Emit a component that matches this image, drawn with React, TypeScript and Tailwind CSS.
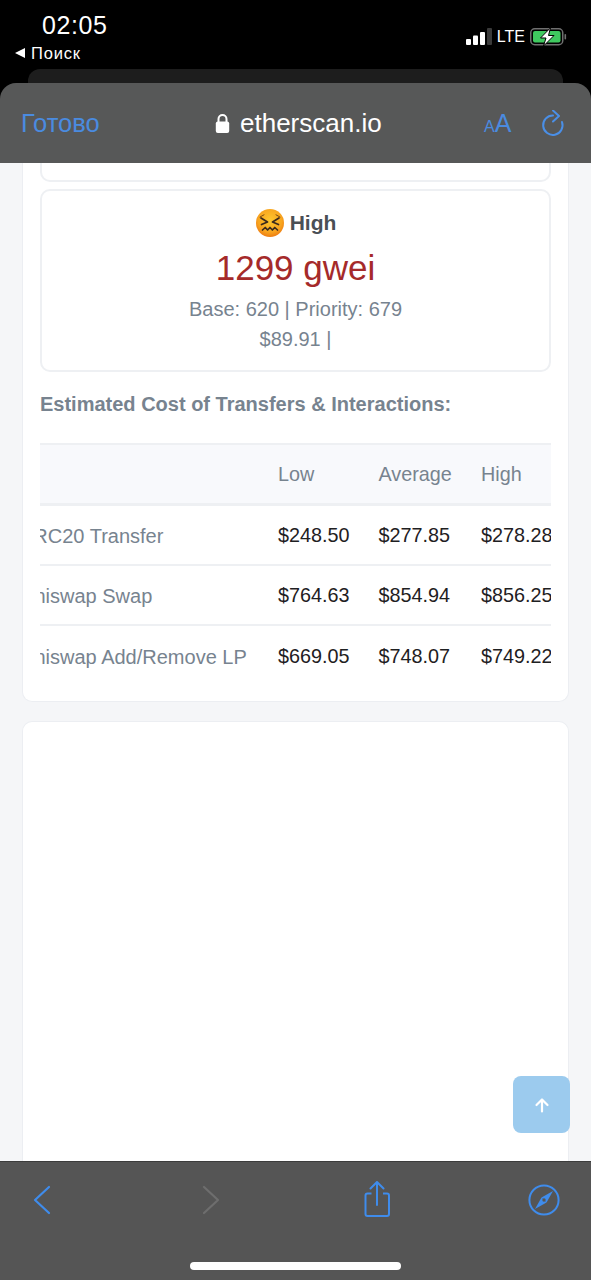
import React from "react";

const font = { fontFamily: '"Liberation Sans", Arial, sans-serif' };

function Signal() {
  return (
    <svg width="26" height="18" viewBox="0 0 26 18" className="block">
      <rect x="0" y="11" width="5" height="6" rx="1" fill="#fff" />
      <rect x="7" y="7.5" width="5" height="9.5" rx="1" fill="#fff" />
      <rect x="14" y="4" width="5" height="13" rx="1" fill="#fff" />
      <rect x="21" y="0" width="5" height="17" rx="1" fill="#3a3a3a" />
    </svg>
  );
}

function Battery() {
  return (
    <svg width="37" height="20" viewBox="0 0 37 20" className="block">
      <rect x="0.75" y="1.75" width="32" height="16" rx="4" fill="none" stroke="#6f6f6f" strokeWidth="1.5" />
      <rect x="3" y="4" width="27.5" height="11.5" rx="2" fill="#3fc95f" />
      <rect x="34.5" y="7" width="1.6" height="5.5" rx="0.8" fill="#6f6f6f" />
      <path d="M20.5 0.8 L10.5 11 H16 L13.5 19 L24 8.5 H18.5 Z" fill="#fff" stroke="#000" strokeWidth="1" />
    </svg>
  );
}

function Lock() {
  return (
    <svg width="15" height="21" viewBox="0 0 15 21" className="block">
      <path d="M3.5 9 V6 a4 4 0 0 1 8 0 V9" fill="none" stroke="#fff" strokeWidth="2" />
      <rect x="0.8" y="8.5" width="13.4" height="11.5" rx="2" fill="#fff" />
    </svg>
  );
}

function Reload() {
  return (
    <svg width="26" height="28" viewBox="0 0 26 28" className="block">
      <path d="M12 5.5 A9.7 9.7 0 1 0 21 12" fill="none" stroke="#4a8fe7" strokeWidth="2" strokeLinecap="round" />
      <path d="M12 0.5 L18 6 L12 11.5" fill="none" stroke="#4a8fe7" strokeWidth="2" strokeLinecap="round" strokeLinejoin="round" />
    </svg>
  );
}

function Emoji() {
  return (
    <svg width="30" height="30" viewBox="0 0 30 30" className="block">
      <defs>
        <radialGradient id="face" cx="50%" cy="40%" r="60%">
          <stop offset="0%" stopColor="#fdc72e" />
          <stop offset="70%" stopColor="#f8a51f" />
          <stop offset="100%" stopColor="#ee7d12" />
        </radialGradient>
      </defs>
      <circle cx="15" cy="15" r="14" fill="url(#face)" />
      <path d="M6 10 L12.5 14 L6.5 16.5 M24 10 L17.5 14 L23.5 16.5" fill="none" stroke="#3b2a1d" strokeWidth="1.7" strokeLinecap="round" strokeLinejoin="round" />
      <path d="M5 9 L9 6.8 M25 9 L21 6.8" fill="none" stroke="#7a4a12" strokeWidth="1" strokeLinecap="round" />
      <path d="M7.5 22 L10.2 19.5 L12.6 22 L15 19.5 L17.4 22 L19.8 19.5 L22.5 22" fill="none" stroke="#3b2a1d" strokeWidth="1.7" strokeLinecap="round" strokeLinejoin="round" />
    </svg>
  );
}

function Back() {
  return (
    <svg width="32" height="34" viewBox="0 0 32 34" className="block">
      <path d="M23 4 L9 17 L23 30" fill="none" stroke="#3f8cec" strokeWidth="2.2" strokeLinecap="round" strokeLinejoin="round" />
    </svg>
  );
}

function Forward() {
  return (
    <svg width="32" height="34" viewBox="0 0 32 34" className="block">
      <path d="M11 4 L25 17 L11 30" fill="none" stroke="#6e6e6e" strokeWidth="2.2" strokeLinecap="round" strokeLinejoin="round" />
    </svg>
  );
}

function Share() {
  return (
    <svg width="32" height="38" viewBox="0 0 32 38" className="block">
      <path d="M10.5 12.5 H6.5 a2 2 0 0 0 -2 2 V33 a2 2 0 0 0 2 2 H26 a2 2 0 0 0 2 -2 V14.5 a2 2 0 0 0 -2 -2 H22" fill="none" stroke="#3f8cec" strokeWidth="2" />
      <path d="M16 24 V1.5 M9.5 7.5 L16 1 L22.5 7.5" fill="none" stroke="#3f8cec" strokeWidth="2" strokeLinecap="round" strokeLinejoin="round" />
    </svg>
  );
}

function Compass() {
  return (
    <svg width="32" height="34" viewBox="0 0 32 34" className="block">
      <circle cx="16" cy="17" r="14.6" fill="none" stroke="#3f8cec" strokeWidth="2" />
      <path d="M25 8 L18.5 19.5 L13.5 14.5 Z" fill="#3f8cec" />
      <path d="M7 26 L13.5 14.5 L18.5 19.5 Z" fill="#3f8cec" />
      <circle cx="16" cy="17" r="1.7" fill="#555" />
    </svg>
  );
}

const rows = [
  ["ERC20 Transfer", "$248.50", "$277.85", "$278.28"],
  ["Uniswap Swap", "$764.63", "$854.94", "$856.25"],
  ["Uniswap Add/Remove LP", "$669.05", "$748.07", "$749.22"],
];

function Row({ cells, last }: { cells: string[]; last: boolean }) {
  return (
    <div className={`flex h-[60px] items-center whitespace-nowrap pt-[1px] text-[19.8px] ${last ? "" : "border-b-2 border-[#eef0f3]"}`}>
      <div className="w-[258px] shrink-0 text-[20px] text-[#77838f]">{cells[0]}</div>
      <div className="w-[100.5px] shrink-0 text-[#1e2022]">{cells[1]}</div>
      <div className="w-[102.5px] shrink-0 text-[#1e2022]">{cells[2]}</div>
      <div className="shrink-0 text-[#1e2022]">{cells[3]}</div>
    </div>
  );
}

export default function App() {
  return (
    <div className="relative flex h-[1280px] w-[591px] flex-col overflow-hidden bg-black" style={font}>
      <div className="flex h-[69px] shrink-0 items-start justify-between">
        <div>
          <div className="ml-[42px] mt-[11px] text-[25px] leading-[28px] tracking-[0.6px] text-white">02:05</div>
          <div className="ml-[15px] mt-[4px] flex items-center gap-[6px] text-[16.5px] leading-[20px] tracking-[0.8px] text-white">
            <span className="block h-0 w-0 border-y-[5px] border-r-[10px] border-y-transparent border-r-white" />
            <span>Поиск</span>
          </div>
        </div>
        <div className="mr-[24px] mt-[27px] flex items-center gap-[5px]">
          <Signal />
          <span className="text-[16px] leading-[20px] text-white">LTE</span>
          <Battery />
        </div>
      </div>
      <div className="mx-[28px] h-[14px] shrink-0 rounded-t-[12px] bg-[#1d1d1d]" />
      <div className="flex h-[80px] shrink-0 items-center rounded-t-[16px] bg-[#575858] pt-[1px]">
        <div className="w-[215px] pl-[21px] text-[25.5px] text-[#4a8be0]">Готово</div>
        <Lock />
        <div className="ml-[10px] w-[244px] text-[26px] font-medium text-white">etherscan.io</div>
        <div className="flex w-[57px] items-baseline text-[#4a8be0]">
          <span className="text-[16px]">A</span>
          <span className="text-[25px]">A</span>
        </div>
        <Reload />
      </div>
      <main className="h-[998px] shrink-0 overflow-hidden bg-[#f5f6f8] px-[22px]">
        <section className="rounded-b-[10px] border-x border-b border-[#eceef2] bg-white px-[17px] pb-[15px]">
          <div className="h-[19px] rounded-b-[10px] border-x-2 border-b-2 border-[#eef0f3]" />
          <div className="mt-[7px] flex h-[183px] flex-col items-center rounded-[10px] border-2 border-[#eef0f3] pt-[16px]">
            <div className="flex h-[32px] items-center gap-[5px]">
              <Emoji />
              <span className="text-[21px] font-bold text-[#4a4f55]">High</span>
            </div>
            <div className="mt-[7px] text-[35px] leading-[44px] text-[#a52a2a]">1299 gwei</div>
            <div className="mt-[4px] text-[20px] leading-[30px] text-[#77838f]">Base: 620 | Priority: 679</div>
            <div className="text-[20px] leading-[30px] text-[#77838f]">$89.91 |</div>
          </div>
          <h2 className="mt-[20px] text-[20px] font-bold leading-[24px] text-[#77838f]">Estimated Cost of Transfers &amp; Interactions:</h2>
          <div className="mt-[27px] overflow-hidden">
            <div className="ml-[-20px] w-[560px]">
              <div className="flex h-[63px] items-center whitespace-nowrap border-y-2 border-b-[3px] border-[#eef0f3] bg-[#f8f9fc] pt-[1px] text-[19.8px] text-[#77838f]">
                <div className="w-[258px] shrink-0" />
                <div className="w-[100.5px] shrink-0">Low</div>
                <div className="w-[102.5px] shrink-0">Average</div>
                <div>High</div>
              </div>
              {rows.map((r, i) => (
                <Row key={r[0]} cells={r} last={i === rows.length - 1} />
              ))}
            </div>
          </div>
        </section>
        <section className="mt-[19px] h-[500px] rounded-t-[10px] border-x border-t border-[#eceef2] bg-white" />
      </main>
      <div className="flex flex-1 flex-col border-t border-[#3c3c3c] bg-[#555555]">
        <div className="mt-[19px] flex h-[38px] items-center gap-[135.33px] px-[26px]">
          <Back />
          <Forward />
          <Share />
          <Compass />
        </div>
        <div className="mx-auto mt-[43px] h-[8px] w-[211px] rounded-full bg-white" />
      </div>
      <button className="absolute left-[513px] top-[1076px] flex h-[57px] w-[57px] items-center justify-center rounded-[8px] bg-[#9ccbee]">
        <svg width="16" height="16" viewBox="0 0 16 16">
          <path d="M8 14.5 V2.5 M2.5 8 L8 2.5 L13.5 8" fill="none" stroke="#fff" strokeWidth="2.2" strokeLinecap="round" strokeLinejoin="round" />
        </svg>
      </button>
    </div>
  );
}
